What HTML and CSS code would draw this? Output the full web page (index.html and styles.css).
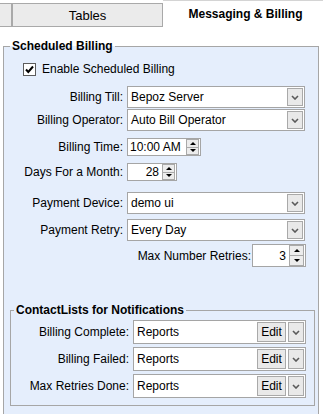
FILE: index.html
```html
<!DOCTYPE html>
<html>
<head>
<meta charset="utf-8">
<link rel="stylesheet" href="styles.css">
</head>
<body>
<div class="tabs">
  <div class="tab-stub"></div>
  <div class="tab-tables">Tables</div>
  <div class="tab-active">Messaging &amp; Billing</div>
</div>
<fieldset class="group outer">
  <legend class="legend">Scheduled Billing</legend>
  <label class="check-row">
    <span class="checkbox"><svg width="11" height="11" viewBox="0 0 11 11"><path d="M2 5.5 L4.3 8 L9 2.5" fill="none" stroke="#000" stroke-width="2"/></svg></span>
    Enable Scheduled Billing
  </label>

  <div class="row m-till">
    <span class="lbl">Billing Till:</span>
    <div class="select"><span class="val">Bepoz Server</span><span class="dd-btn"><svg width="8" height="5" viewBox="0 0 8 5"><path d="M1 1 L4 4 L7 1" fill="none" stroke="#5a5a5a" stroke-width="1.6"/></svg></span></div>
  </div>
  <div class="row m-op">
    <span class="lbl">Billing Operator:</span>
    <div class="select"><span class="val">Auto Bill Operator</span><span class="dd-btn"><svg width="8" height="5" viewBox="0 0 8 5"><path d="M1 1 L4 4 L7 1" fill="none" stroke="#5a5a5a" stroke-width="1.6"/></svg></span></div>
  </div>
  <div class="row m-time">
    <span class="lbl">Billing Time:</span>
    <div class="spin spin-time"><span class="spin-val">10:00 AM</span><span class="spin-btns"><span class="spin-btn"><span class="tri-up"></span></span><span class="spin-btn"><span class="tri-down"></span></span></span></div>
  </div>
  <div class="row m-days">
    <span class="lbl">Days For a Month:</span>
    <div class="spin spin-days"><span class="spin-val right">28</span><span class="spin-btns"><span class="spin-btn"><span class="tri-up"></span></span><span class="spin-btn"><span class="tri-down"></span></span></span></div>
  </div>
  <div class="row m-dev">
    <span class="lbl">Payment Device:</span>
    <div class="select"><span class="val">demo ui</span><span class="dd-btn"><svg width="8" height="5" viewBox="0 0 8 5"><path d="M1 1 L4 4 L7 1" fill="none" stroke="#5a5a5a" stroke-width="1.6"/></svg></span></div>
  </div>
  <div class="row m-retry">
    <span class="lbl">Payment Retry:</span>
    <div class="select"><span class="val">Every Day</span><span class="dd-btn"><svg width="8" height="5" viewBox="0 0 8 5"><path d="M1 1 L4 4 L7 1" fill="none" stroke="#5a5a5a" stroke-width="1.6"/></svg></span></div>
  </div>
  <div class="row-end m-max">
    <span class="lbl-inline">Max Number Retries:</span>
    <div class="spin spin-max"><span class="spin-val right">3</span><span class="spin-btns wide"><span class="spin-btn"><span class="tri-up"></span></span><span class="spin-btn"><span class="tri-down"></span></span></span></div>
  </div>

  <fieldset class="group inner">
    <legend class="legend">ContactLists for Notifications</legend>
    <div class="crow">
      <span class="clbl">Billing Complete:</span>
      <div class="combo"><span class="val">Reports</span><span class="edit-btn">Edit</span><span class="dd-btn"><svg width="8" height="5" viewBox="0 0 8 5"><path d="M1 1 L4 4 L7 1" fill="none" stroke="#5a5a5a" stroke-width="1.6"/></svg></span></div>
    </div>
    <div class="crow">
      <span class="clbl">Billing Failed:</span>
      <div class="combo"><span class="val">Reports</span><span class="edit-btn">Edit</span><span class="dd-btn"><svg width="8" height="5" viewBox="0 0 8 5"><path d="M1 1 L4 4 L7 1" fill="none" stroke="#5a5a5a" stroke-width="1.6"/></svg></span></div>
    </div>
    <div class="crow">
      <span class="clbl">Max Retries Done:</span>
      <div class="combo"><span class="val">Reports</span><span class="edit-btn">Edit</span><span class="dd-btn"><svg width="8" height="5" viewBox="0 0 8 5"><path d="M1 1 L4 4 L7 1" fill="none" stroke="#5a5a5a" stroke-width="1.6"/></svg></span></div>
    </div>
  </fieldset>
</fieldset>
</body>
</html>
```
FILE: styles.css
```css
* { box-sizing: border-box; }
html, body { margin: 0; padding: 0; }
body {
  width: 323px;
  height: 414px;
  overflow: hidden;
  background: #fff;
  color: #000;
  font-family: "Liberation Sans", Arial, sans-serif;
  font-size: 12px;
}

/* Tabs */
.tabs {
  display: flex;
  align-items: flex-end;
  height: 27px;
}
.tab-stub {
  width: 12px;
  height: 24px;
  background: #ebebeb;
  border-top: 1px solid #a9a9a9;
  border-bottom: 1px solid #a9a9a9;
  border-right: 1px solid #a9a9a9;
}
.tab-tables {
  width: 151px;
  height: 24px;
  background: #ebebeb;
  border: 1px solid #a9a9a9;
  font-size: 13px;
  display: flex;
  align-items: center;
  justify-content: center;
}
.tab-active {
  flex: 1;
  height: 27px;
  background: #fff;
  border-top: 1px solid #d4d4d4;
  font-weight: bold;
  font-size: 12px;
  display: flex;
  align-items: center;
  justify-content: center;
  padding-left: 5px;
  padding-bottom: 1px;
}

/* Fieldsets */
.group {
  margin: 0;
  border: 1px solid #a6a6a6;
  background: #e5eefc;
  min-width: 0;
}
.outer {
  margin: 11px 4px 0 3px;
  padding: 6px 0 9px 0;
}
.inner {
  margin: 35px 3px 0 6px;
  padding: 2px 0 7px 0;
}
.legend {
  font-weight: bold;
  line-height: 16px;
  padding: 0 2px;
  margin-left: 6px;
}
.inner .legend { margin-left: 3px; }

/* Checkbox row */
.check-row {
  display: flex;
  align-items: center;
  height: 18px;
  padding-left: 19px;
  gap: 6px;
}
.checkbox {
  width: 13px;
  height: 13px;
  border: 1px solid #5c5c5c;
  background: #fff;
  display: flex;
  align-items: center;
  justify-content: center;
}

/* Rows */
.row { display: flex; align-items: center; }
.row-end { display: flex; align-items: center; justify-content: flex-end; padding-right: 12px; }
.lbl {
  width: 119px;
  margin-right: 4px;
  text-align: right;
  white-space: nowrap;
}
.lbl-inline { margin-right: 1px; white-space: nowrap; }
.m-till { margin-top: 8px; }
.m-op { margin-top: 1px; }
.m-time { margin-top: 7px; }
.m-days { margin-top: 7px; }
.m-dev { margin-top: 11px; }
.m-retry { margin-top: 5px; }
.m-max { margin-top: 3px; }

/* Select */
.select {
  width: 178px;
  height: 22px;
  background: #fff;
  border: 1px solid #a5a5a5;
  padding: 1px;
  display: flex;
  align-items: center;
}
.val {
  flex: 1;
  padding-left: 2px;
  white-space: nowrap;
}
.dd-btn {
  width: 16px;
  height: 18px;
  background: #e9e9e9;
  border: 1px solid #a9a9a9;
  display: flex;
  align-items: center;
  justify-content: center;
}

/* Spinner */
.spin {
  height: 18px;
  background: #fff;
  border: 1px solid #a5a5a5;
  display: flex;
  align-items: stretch;
}
.spin-time { width: 74px; }
.spin-days { width: 50px; }
.spin-max { width: 54px; height: 23px; }
.spin-val {
  flex: 1;
  padding-left: 2px;
  display: flex;
  align-items: center;
  white-space: nowrap;
}
.spin-val.right { justify-content: flex-end; padding-right: 3px; }
.spin-btns {
  width: 13px;
  display: flex;
  flex-direction: column;
  margin-right: 1px;
}
.spin-btns.wide { width: 15px; }
.spin-btn {
  flex: 1;
  background: #ececec;
  border: 1px solid #a9a9a9;
  display: flex;
  align-items: center;
  justify-content: center;
}
.spin-btn + .spin-btn { border-top: none; }
.tri-up {
  width: 0; height: 0;
  border-left: 3px solid transparent;
  border-right: 3px solid transparent;
  border-bottom: 3px solid #000;
}
.tri-down {
  width: 0; height: 0;
  border-left: 3px solid transparent;
  border-right: 3px solid transparent;
  border-top: 3px solid #000;
}

/* Contact rows */
.crow { display: flex; align-items: center; }
.crow + .crow { margin-top: 3px; }
.clbl {
  width: 118px;
  margin-right: 4px;
  text-align: right;
  white-space: nowrap;
}
.combo {
  width: 173px;
  height: 24px;
  background: #fff;
  border: 1px solid #a5a5a5;
  padding: 1px 1px 1px 1px;
  display: flex;
  align-items: center;
  gap: 2px;
}
.combo .val { padding-left: 2px; }
.combo .dd-btn { height: 20px; }
.edit-btn {
  width: 29px;
  height: 20px;
  background: #e9e9e9;
  border: 1px solid #a9a9a9;
  display: flex;
  align-items: center;
  justify-content: center;
}
```
